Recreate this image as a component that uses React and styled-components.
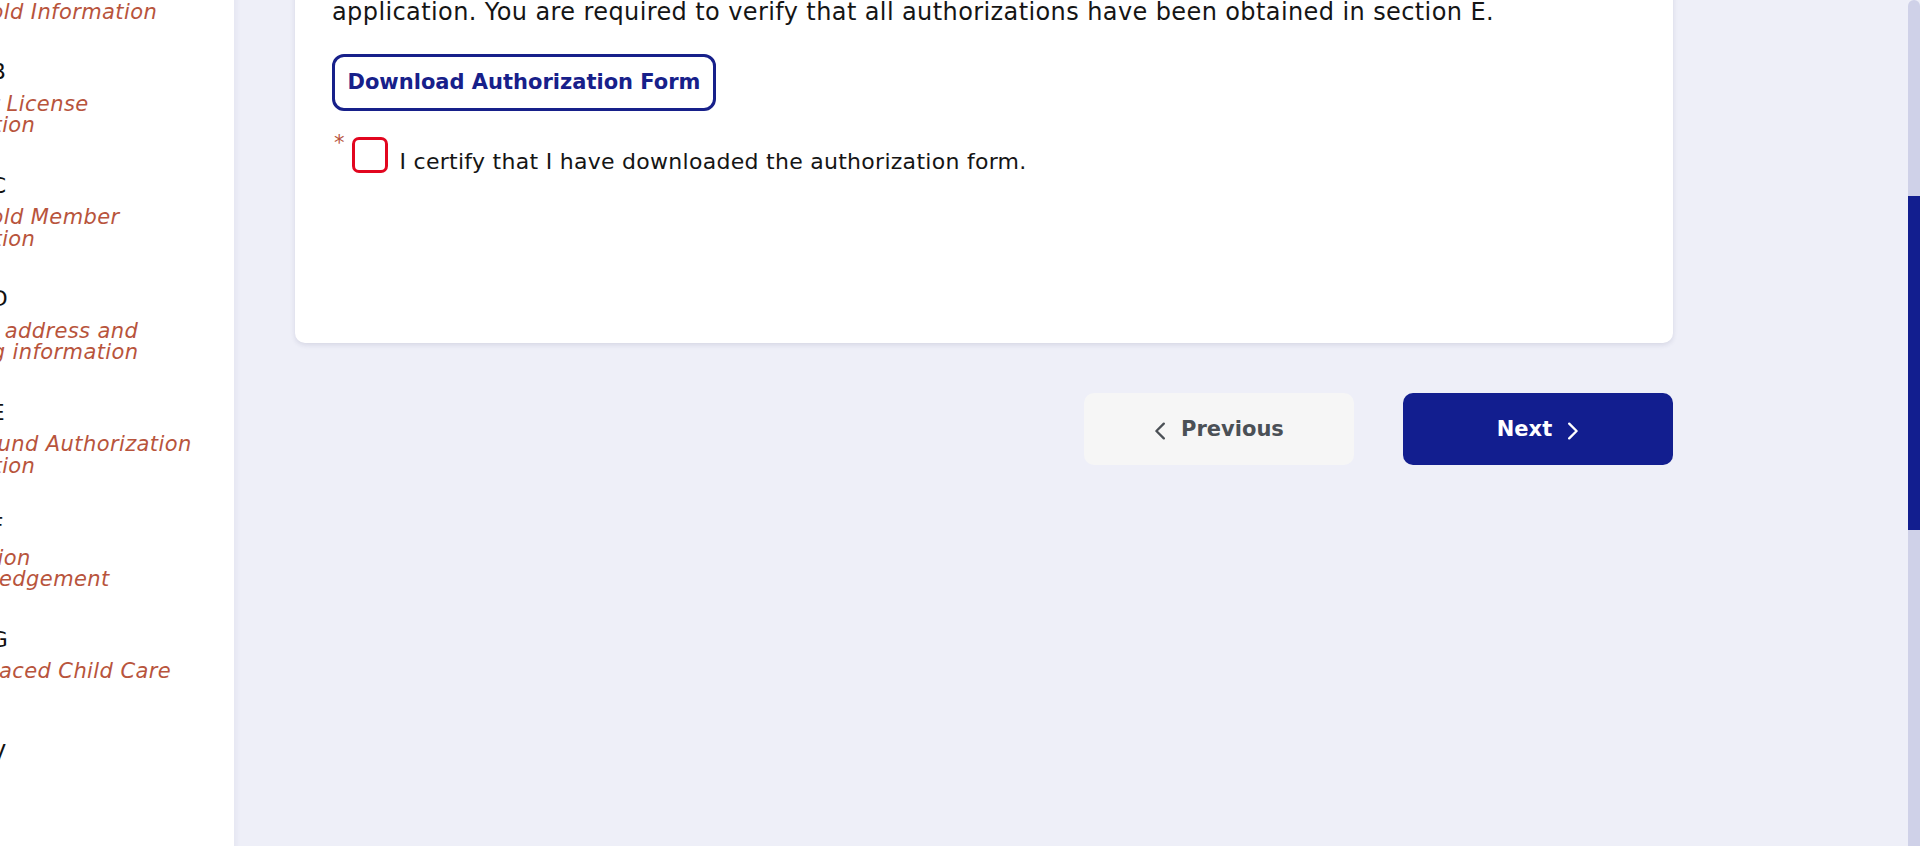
import React, { useCallback, useLayoutEffect, useRef, useState } from "react";
import styled, { createGlobalStyle } from "styled-components";

// the screenshot shows the page scrolled part way down
const SCROLL_TOP = 497;

const GlobalStyle = createGlobalStyle`
  html, body {
    margin: 0;
    height: 100%;
    overflow: hidden;
  }
  body {
    font-family: "DejaVu Sans", Verdana, sans-serif;
    color: #151515;
  }
  #root {
    height: 100%;
  }
`;

const Layout = styled.div`
  display: flex;
  height: 100vh;
  background: #eeeff8;
`;

const Scroller = styled.div`
  flex: 1;
  min-width: 0;
  overflow-y: auto;
  overflow-x: hidden;
  scrollbar-width: none;

  &::-webkit-scrollbar {
    display: none;
  }
`;

const ScrollTrack = styled.div`
  width: 12px;
  flex: none;
  background: #cfd1e8;
  border-radius: 6px 6px 0 0;
`;

const ScrollThumb = styled.div`
  width: 100%;
  background: #121e8f;
`;

const TopBar = styled.header`
  height: 96px;
  display: flex;
  align-items: center;
  padding: 0 32px;
  background: #121e8f;
  color: #fff;
  font-size: 26px;
  font-weight: bold;
`;

const Body = styled.div`
  display: flex;
  min-height: 2047px;
`;

const Sidebar = styled.nav`
  width: 234px;
  flex: none;
  padding-top: 6.4px;
  background: #fff;
  overflow: hidden;
  box-shadow: 2px 0 6px rgba(30, 30, 90, 0.05);
`;

const SectionList = styled.ul`
  list-style: none;
  margin: 0 0 0 -98px;
  padding: 0;
`;

const SectionItem = styled.li`
  height: 113.5px;
  white-space: nowrap;
`;

const SectionName = styled.div`
  font-size: 22px;
  line-height: 26px;
  color: #111;
`;

const SectionDesc = styled.div`
  margin-top: 8.6px;
  padding-left: 7px;
  font-size: 21px;
  line-height: 21.5px;
  font-style: italic;
  letter-spacing: 0.4px;
  color: #b8543c;

  span {
    display: block;
  }
`;

const Main = styled.main`
  flex: 1;
  min-width: 0;
  padding: 44.7px 61px 80px;
`;

const Column = styled.div`
  width: 1378px;
`;

const PageTitle = styled.h1`
  margin: 0 0 8px;
  font-size: 32px;
  line-height: 40px;
  color: #121e8f;
`;

const PageIntro = styled.p`
  margin: 0 0 68px;
  font-size: 20px;
  line-height: 28px;
  color: #333;
`;

const Card = styled.section`
  display: flex;
  flex-direction: column;
  align-items: flex-start;
  padding: 36px 37px 170px;
  background: #fff;
  border-radius: 10px;
  box-shadow: 0 2px 5px rgba(40, 40, 90, 0.12);
`;

const CardTitle = styled.h2`
  margin: 0 0 20px;
  font-size: 28px;
  line-height: 36px;
  color: #121e8f;
`;

const Text = styled.p`
  margin: 0 0 ${(p) => (p.$last ? "26.3px" : "20px")};
  font-size: 24px;
  line-height: 32px;
  letter-spacing: 0.4px;
`;

const DownloadButton = styled.button`
  width: 384px;
  height: 57px;
  margin-bottom: 26px;
  display: flex;
  align-items: center;
  justify-content: center;
  padding: 0;
  background: #fff;
  border: 3px solid #17208a;
  border-radius: 12px;
  color: #17208a;
  font-family: inherit;
  font-size: 21px;
  font-weight: bold;
  cursor: pointer;
`;

const CheckRow = styled.div`
  display: flex;
  align-items: flex-end;
`;

const Required = styled.span`
  align-self: flex-start;
  margin: -4px 7px 0 2px;
  font-size: 21px;
  line-height: 20px;
  color: #b8543c;
`;

const CheckBox = styled.input`
  appearance: none;
  margin: 0;
  width: 36px;
  height: 36px;
  border: 3px solid #e2061f;
  border-radius: 7px;
  background: #fff;
`;

const CheckLabel = styled.label`
  margin-left: 12px;
  font-size: 22px;
  line-height: 22px;
  letter-spacing: 0.28px;
`;

const NavRow = styled.div`
  display: flex;
  justify-content: flex-end;
  gap: 49px;
  margin-top: 50px;
`;

const NavButton = styled.button`
  width: 270px;
  height: 72px;
  display: flex;
  align-items: center;
  justify-content: center;
  gap: 15px;
  border: none;
  border-radius: 10px;
  background: ${(p) => (p.$primary ? "#121e8f" : "#f6f6f6")};
  color: ${(p) => (p.$primary ? "#fff" : "#4b5056")};
  font-family: inherit;
  font-size: 21px;
  font-weight: bold;
  cursor: pointer;

  svg {
    margin-top: 4px;
  }
`;

const Chevron = ({ dir }) => (
  <svg width="12" height="18" viewBox="0 0 12 18">
    <path
      d={dir === "left" ? "M9.8 1.6 2.4 9l7.4 7.4" : "M2.2 1.6 9.6 9l-7.4 7.4"}
      fill="none"
      stroke="currentColor"
      strokeWidth="2.3"
      strokeLinecap="round"
      strokeLinejoin="round"
    />
  </svg>
);

const sections = [
  { name: "Welcome", lines: ["Before you begin"] },
  { name: "Instructions", lines: ["How to complete", "this application"] },
  { name: "Eligibility", lines: ["Licensing requirements"] },
  { name: "Section A", lines: ["Applicant and", "Household Information"] },
  { name: "Section B", lines: ["Provider License", "Information"] },
  { name: "Section C", lines: ["Household Member", "Information"] },
  { name: "Section D", lines: ["Physical address and", "licensing information"] },
  { name: "Section E", lines: ["Background Authorization", "Information"] },
  { name: "Section F", lines: ["Application", "Acknowledgement"] },
  { name: "Section G", lines: ["Home Placed Child Care"] },
  { name: "Section V", lines: ["Review"] },
  { name: "Submit", lines: ["Sign and send"] },
];

const App = () => {
  const scroller = useRef(null);
  const [thumb, setThumb] = useState({ top: 0, height: 0 });

  const syncThumb = useCallback(() => {
    const el = scroller.current;
    if (!el) return;
    const { scrollTop, scrollHeight, clientHeight } = el;
    const height = (clientHeight * clientHeight) / scrollHeight;
    const range = scrollHeight - clientHeight;
    const top = range > 0 ? (scrollTop / range) * (clientHeight - height) : 0;
    setThumb({ top, height });
  }, []);

  useLayoutEffect(() => {
    if (scroller.current) scroller.current.scrollTop = SCROLL_TOP;
    syncThumb();
  }, [syncThumb]);

  return (
    <>
      <GlobalStyle />
      <Layout>
        <Scroller ref={scroller} onScroll={syncThumb}>
          <TopBar>Child Care License Application</TopBar>
          <Body>
            <Sidebar>
              <SectionList>
                {sections.map((s) => (
                  <SectionItem key={s.name}>
                    <SectionName>{s.name}</SectionName>
                    <SectionDesc>
                      {s.lines.map((l) => (
                        <span key={l}>{l}</span>
                      ))}
                    </SectionDesc>
                  </SectionItem>
                ))}
              </SectionList>
            </Sidebar>
            <Main>
              <Column>
                <PageTitle>Background Authorization</PageTitle>
                <PageIntro>Complete every section before you submit your application.</PageIntro>
                <Card>
                  <CardTitle>Section E: Background Authorization Information</CardTitle>
                  <Text>
                    Each household member age 16 or older, and any person who will have unsupervised
                    access to children in your care, must sign a background check authorization.
                  </Text>
                  <Text $last>
                    Each signed form must be kept on file with this
                    <br />
                    application. You are required to verify that all authorizations have been
                    obtained in section E.
                  </Text>
                  <DownloadButton type="button">Download Authorization Form</DownloadButton>
                  <CheckRow>
                    <Required>*</Required>
                    <CheckBox type="checkbox" id="certify" />
                    <CheckLabel htmlFor="certify">
                      I certify that I have downloaded the authorization form.
                    </CheckLabel>
                  </CheckRow>
                </Card>
                <NavRow>
                  <NavButton type="button">
                    <Chevron dir="left" />
                    Previous
                  </NavButton>
                  <NavButton type="button" $primary>
                    Next
                    <Chevron dir="right" />
                  </NavButton>
                </NavRow>
              </Column>
            </Main>
          </Body>
        </Scroller>
        <ScrollTrack>
          <ScrollThumb style={{ marginTop: thumb.top, height: thumb.height }} />
        </ScrollTrack>
      </Layout>
    </>
  );
};

export default App;
